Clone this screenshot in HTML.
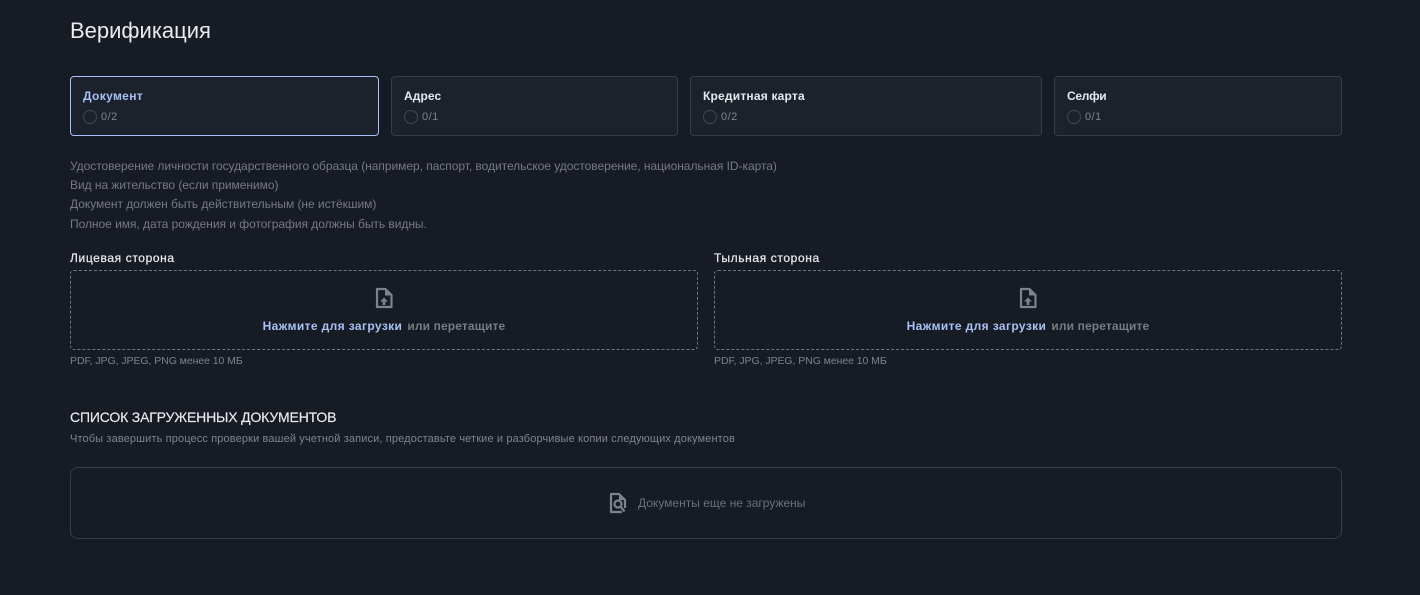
<!DOCTYPE html>
<html lang="ru">
<head>
<meta charset="utf-8">
<title>Верификация</title>
<style>
*{box-sizing:border-box;margin:0;padding:0}
html,body{width:1420px;height:595px;overflow:hidden;background:#171b24}
body{position:relative;font-family:"Liberation Sans","DejaVu Sans",sans-serif}
.t{position:absolute;white-space:nowrap}
.card{position:absolute;top:76px;height:60px;background:#1c222c;border:1px solid #373c48;border-radius:4px}
.card.a{border-color:#a6c2f6}
.card b{position:absolute;left:12px;top:12px;font-size:12px;line-height:15px;color:#e6e8ec;white-space:nowrap;letter-spacing:.1px}
.card.a b{color:#a6c2f6;letter-spacing:.35px}
.card i{position:absolute;left:12px;top:33px;width:14px;height:14px;border:1.5px solid #414753;border-radius:50%}
.card span{position:absolute;left:30px;top:34px;font-size:11px;line-height:13px;letter-spacing:.5px;color:#7d828c}
.info{font-size:12px;line-height:19.2px;color:#777a82;letter-spacing:-.04px}
.lab{font-size:12px;line-height:15px;color:#e6e8ec;letter-spacing:.62px;-webkit-text-stroke:.25px #e6e8ec}
.drop{position:absolute;top:270px;width:628px;height:80px;border:1px dashed #70747c;border-radius:4px}
.drop svg{position:absolute;left:303px;top:16px}
.drop p{position:absolute;left:0;right:0;top:48px;text-align:center;font-size:12px;line-height:14px;font-weight:bold;color:#767b85;white-space:nowrap;letter-spacing:.14px}
.drop p em{font-style:normal;color:#a6c2f6;margin-right:5px;letter-spacing:.38px}
.hint{font-size:10.5px;line-height:13px;color:#7d828c;letter-spacing:-.06px}
.box{position:absolute;left:70px;top:467px;width:1272px;height:72px;border:1px solid #373c48;border-radius:8px}
</style>
</head>
<body>
<div class="t" style="left:70px;top:18px;font-size:22px;line-height:26px;color:#e9ebef">Верификация</div>

<div class="card a" style="left:70px;width:309px"><b>Документ</b><i></i><span>0/2</span></div>
<div class="card" style="left:391px;width:287px"><b>Адрес</b><i></i><span>0/1</span></div>
<div class="card" style="left:690px;width:352px"><b style="letter-spacing:.2px">Кредитная карта</b><i></i><span>0/2</span></div>
<div class="card" style="left:1054px;width:288px"><b style="letter-spacing:-.3px">Селфи</b><i></i><span>0/1</span></div>

<div class="t info" style="left:70px;top:157px">Удостоверение личности государственного образца (например, паспорт, водительское удостоверение, национальная ID-карта)<br>Вид на жительство (если применимо)<br>Документ должен быть действительным (не истёкшим)<br>Полное имя, дата рождения и фотография должны быть видны.</div>

<div class="t lab" style="left:70px;top:251px">Лицевая сторона</div>
<div class="t lab" style="left:714px;top:251px">Тыльная сторона</div>

<div class="drop" style="left:70px">
<svg width="20" height="22" viewBox="0 0 20 22"><path d="M3 2h8.500L17.500 8V20H3z" fill="none" stroke="#7d828c" stroke-width="2.200" stroke-linejoin="round"/><path d="M11 2v6.500h6.500" fill="#7d828c"/><path d="M10 10.500l-4 4h2.600V18h2.800v-3.500H14z" fill="#7d828c"/></svg>
<p><em>Нажмите для загрузки</em>или перетащите</p>
</div>
<div class="drop" style="left:714px">
<svg width="20" height="22" viewBox="0 0 20 22"><path d="M3 2h8.500L17.500 8V20H3z" fill="none" stroke="#7d828c" stroke-width="2.200" stroke-linejoin="round"/><path d="M11 2v6.500h6.500" fill="#7d828c"/><path d="M10 10.500l-4 4h2.600V18h2.800v-3.500H14z" fill="#7d828c"/></svg>
<p><em>Нажмите для загрузки</em>или перетащите</p>
</div>

<div class="t hint" style="left:70px;top:355px">PDF, JPG, JPEG, PNG менее 10 МБ</div>
<div class="t hint" style="left:714px;top:355px">PDF, JPG, JPEG, PNG менее 10 МБ</div>

<div class="t" style="left:70px;top:409px;font-size:14px;line-height:17px;color:#e9ebef;letter-spacing:-.17px;-webkit-text-stroke:.15px #e9ebef">СПИСОК ЗАГРУЖЕННЫХ ДОКУМЕНТОВ</div>
<div class="t" style="left:70px;top:433px;font-size:11px;line-height:13px;letter-spacing:.13px;color:#80848d">Чтобы завершить процесс проверки вашей учетной записи, предоставьте четкие и разборчивые копии следующих документов</div>

<div class="box"></div>
<svg style="position:absolute;left:608px;top:492px" width="20" height="22" viewBox="0 0 20 22"><path d="M14 20H3V2h8l6 6v8" fill="none" stroke="#7d828c" stroke-width="2.200" stroke-linejoin="round"/><path d="M11 2v6h6" fill="#7d828c"/><circle cx="10" cy="12" r="3.500" fill="#171b24" stroke="#7d828c" stroke-width="2.200"/><path d="M12.500 14.500l4 5" stroke="#7d828c" stroke-width="2.200"/></svg>
<div class="t" style="left:638px;top:496px;font-size:12px;line-height:15px;color:#6a7079">Документы еще не загружены</div>
</body>
</html>
